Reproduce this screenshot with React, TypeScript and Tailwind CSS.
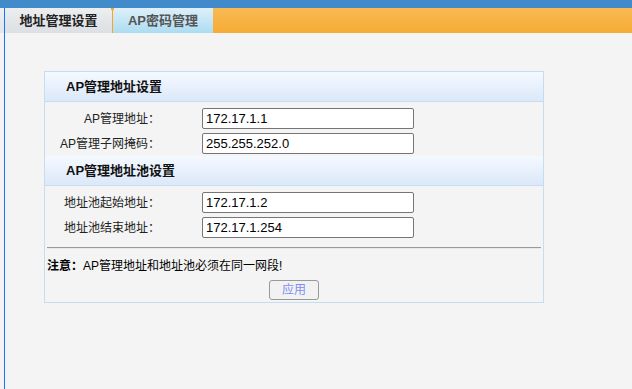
import React from "react";

const font = { fontFamily: '"Liberation Sans", "Noto Sans CJK SC", sans-serif' };

function Row({ label, value }: { label: string; value: string }) {
  return (
    <div className="flex items-center h-[21px]">
      <div className="w-[115px] text-right text-[12px] text-[#222] leading-none">{label}</div>
      <div className="ml-[42px] w-[212px] h-[21px] border border-[#767676] rounded-[2px] bg-white flex items-center pl-[3px] text-[13px] text-black leading-none">
        {value}
      </div>
    </div>
  );
}

function Header({ title }: { title: string }) {
  return (
    <div className="h-[30px] flex items-center pl-[21px] bg-gradient-to-b from-[#f5f9ff] to-[#dbe8f9] text-[13px] font-bold text-[#111] border-b border-[#c6dcf1]">
      {title}
    </div>
  );
}

export default function App() {
  return (
    <div className="w-[632px] h-[389px] bg-[#f4f4f4] flex flex-col overflow-hidden" style={font}>
      <div className="h-[8px] bg-[#428bcb]" />
      <div className="flex flex-1">
        <div className="w-[4px] flex flex-col">
          <div className="h-[25px] bg-gradient-to-b from-[#eef0f3] to-[#e2e5e9]" />
        </div>
        <div className="flex-1 border-l border-[#1a73ff] flex flex-col">
          <div className="h-[25px] flex">
            <div className="w-[107px] flex items-center justify-center bg-gradient-to-b from-[#eceef0] to-[#dcdfe3] text-[13px] font-bold text-[#222]">
              地址管理设置
            </div>
            <div className="w-px bg-[#f5a623] relative">
              <div className="absolute -left-[1px] top-0 w-[3px] h-[2px] bg-[#f5a623]" />
            </div>
            <div className="w-[100px] flex items-center justify-center bg-gradient-to-b from-[#ddf0fa] to-[#acdcf1] text-[13px] font-bold text-[#555]">
              AP密码管理
            </div>
            <div className="flex-1 bg-gradient-to-b from-[#f9b953] to-[#f5ac33]" />
          </div>
          <div className="pl-[39px] pt-[38px]">
            <div className="w-[500px] border border-[#c6dcf1] flex flex-col">
              <Header title="AP管理地址设置" />
              <div className="flex flex-col gap-[4px] pt-[6px] h-[54px]">
                <Row label="AP管理地址：" value="172.17.1.1" />
                <Row label="AP管理子网掩码：" value="255.255.252.0" />
              </div>
              <Header title="AP管理地址池设置" />
              <div className="flex flex-col gap-[4px] pt-[6px]">
                <Row label="地址池起始地址：" value="172.17.1.2" />
                <Row label="地址池结束地址：" value="172.17.1.254" />
              </div>
              <div className="mx-[2px] mt-[9px] border-t border-[#999] border-b border-b-[#e8e8e8]" />
              <div className="pl-[2px] mt-[9px] text-[12px] text-black leading-[16px]">
                <span className="font-bold">注意：</span>AP管理地址和地址池必须在同一网段!
              </div>
              <div className="flex justify-center mt-[6px] mb-[2px]">
                <button className="w-[50px] h-[20px] border border-[#999] rounded-[3px] bg-[#f2f2f2] text-[12px] text-[#7f8ff0] leading-none">
                  应用
                </button>
              </div>
            </div>
          </div>
        </div>
      </div>
    </div>
  );
}
